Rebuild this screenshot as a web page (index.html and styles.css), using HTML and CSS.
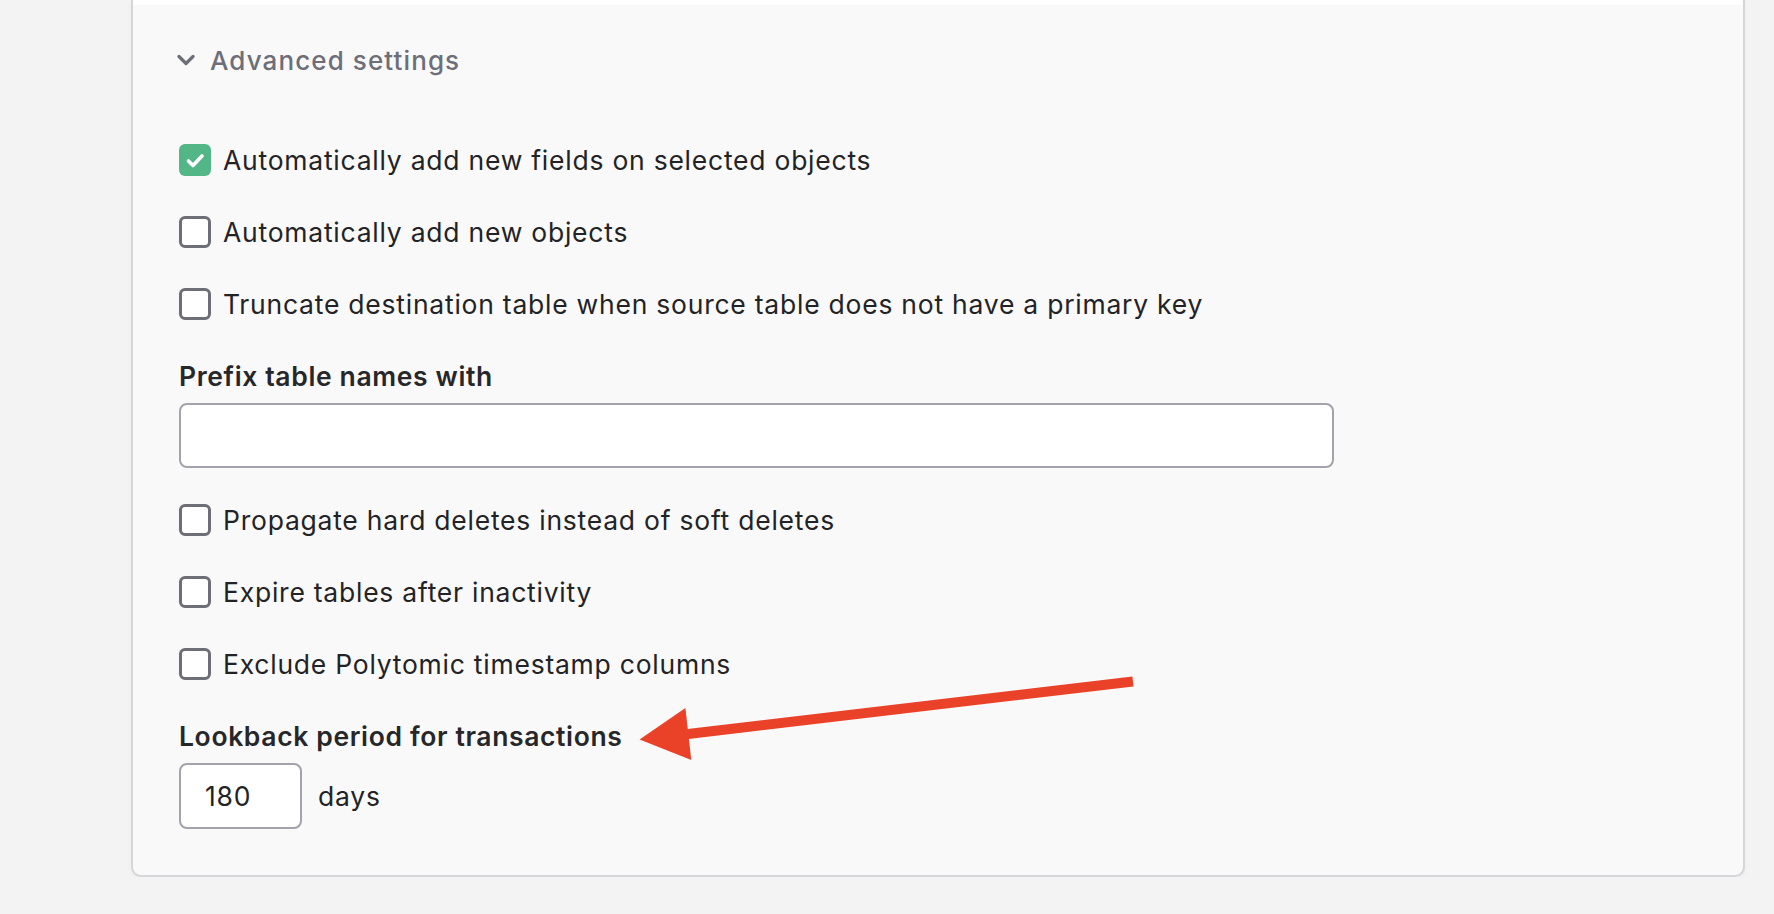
FILE: index.html
```html
<!DOCTYPE html>
<html lang="en">
<head>
<meta charset="utf-8">
<title>Advanced settings</title>
<link rel="stylesheet" href="styles.css">
</head>
<body>
<div class="page">
  <div class="card">
    <div class="card-top"></div>
    <div class="card-body">
      <div class="section-head">
        <svg class="chevron" width="18" height="12" viewBox="0 0 18 12"><path d="M2 2.5 L9 9.5 L16 2.5" fill="none" stroke="#6e6e78" stroke-width="3.2" stroke-linecap="round" stroke-linejoin="round"/></svg>
        <span class="section-title">Advanced settings</span>
      </div>

      <div class="options first">
        <label class="option">
          <span class="box checked"><svg width="32" height="32" viewBox="0 0 32 32"><path d="M9.5 17 L14 21.5 L23 12" fill="none" stroke="#fff" stroke-width="3.6" stroke-linecap="round" stroke-linejoin="round"/></svg></span>
          <span class="opt-text">Automatically add new fields on selected objects</span>
        </label>
        <label class="option">
          <span class="box"></span>
          <span class="opt-text">Automatically add new objects</span>
        </label>
        <label class="option">
          <span class="box"></span>
          <span class="opt-text">Truncate destination table when source table does not have a primary key</span>
        </label>
      </div>

      <div class="field">
        <div class="field-label">Prefix table names with</div>
        <div class="text-input"></div>
      </div>

      <div class="options">
        <label class="option">
          <span class="box"></span>
          <span class="opt-text">Propagate hard deletes instead of soft deletes</span>
        </label>
        <label class="option">
          <span class="box"></span>
          <span class="opt-text">Expire tables after inactivity</span>
        </label>
        <label class="option">
          <span class="box"></span>
          <span class="opt-text">Exclude Polytomic timestamp columns</span>
        </label>
      </div>

      <div class="field">
        <div class="field-label">Lookback period for transactions</div>
        <div class="inline-input">
          <div class="num-input">180</div>
          <span class="unit">days</span>
        </div>
      </div>
    </div>
  </div>
</div>
<svg class="arrow" width="1774" height="914" viewBox="0 0 1774 914">
  <line x1="1133" y1="681.5" x2="686" y2="734.3" stroke="#ea4229" stroke-width="10"/>
  <polygon points="639.6,739.5 685.4,708 691.3,760" fill="#ea4229"/>
</svg>
</body>
</html>
```

FILE: styles.css
```css
html, body {
  margin: 0;
  padding: 0;
}
body {
  background: #f3f3f3;
  font-family: Inter, "Noto Sans", "Liberation Sans", sans-serif;
  color: #27272a;
  overflow: hidden;
}
.page {
  padding-left: 131px;
  width: 1614px;
}
.card {
  background: #f9f9f9;
  border: 2px solid #d6d6da;
  border-top: none;
  border-radius: 0 0 10px 10px;
  box-shadow: 0 2px 4px rgba(0,0,0,0.04);
  overflow: hidden;
}
.card-top {
  height: 5px;
  background: #ffffff;
}
.card-body {
  padding: 39px 46px 46px 46px;
}
.section-head {
  display: flex;
  align-items: center;
  height: 32px;
}
.chevron {
  margin-left: -2px;
  margin-right: 15px;
}
.section-title {
  font-size: 26px;
  font-weight: 500;
  letter-spacing: 1.1px;
  color: #6e6e78;
}
.options {
  display: flex;
  flex-direction: column;
  gap: 40px;
  margin-top: 36px;
}
.options.first {
  margin-top: 68px;
}
.option {
  display: flex;
  align-items: center;
  height: 32px;
  gap: 12px;
}
.box {
  width: 32px;
  height: 32px;
  box-sizing: border-box;
  border: 3px solid #6e6e78;
  border-radius: 6px;
  background: #ffffff;
  flex: none;
  position: relative;
}
.box.checked {
  background: #52b687;
  border: none;
}
.box svg {
  display: block;
}
.opt-text {
  font-size: 26.5px;
  letter-spacing: 0.76px;
  color: #232326;
}
.field {
  margin-top: 41px;
}
.field-label {
  font-size: 26.5px;
  font-weight: 600;
  letter-spacing: 0.63px;
  line-height: 30px;
  color: #27272a;
}
.text-input {
  margin-top: 12px;
  width: 1155px;
  height: 65px;
  box-sizing: border-box;
  background: #ffffff;
  border: 2px solid #a3a3ab;
  border-radius: 8px;
}
.inline-input {
  margin-top: 12px;
  display: flex;
  align-items: center;
  gap: 16px;
}
.num-input {
  width: 123px;
  height: 66px;
  box-sizing: border-box;
  background: #ffffff;
  border: 2px solid #a3a3ab;
  border-radius: 8px;
  padding-left: 24px;
  display: flex;
  align-items: center;
  font-size: 26.5px;
  letter-spacing: 0.76px;
  color: #232326;
}
.unit {
  font-size: 26.5px;
  letter-spacing: 0.76px;
  color: #232326;
}
.arrow {
  position: absolute;
  left: 0;
  top: 0;
  pointer-events: none;
}
```
